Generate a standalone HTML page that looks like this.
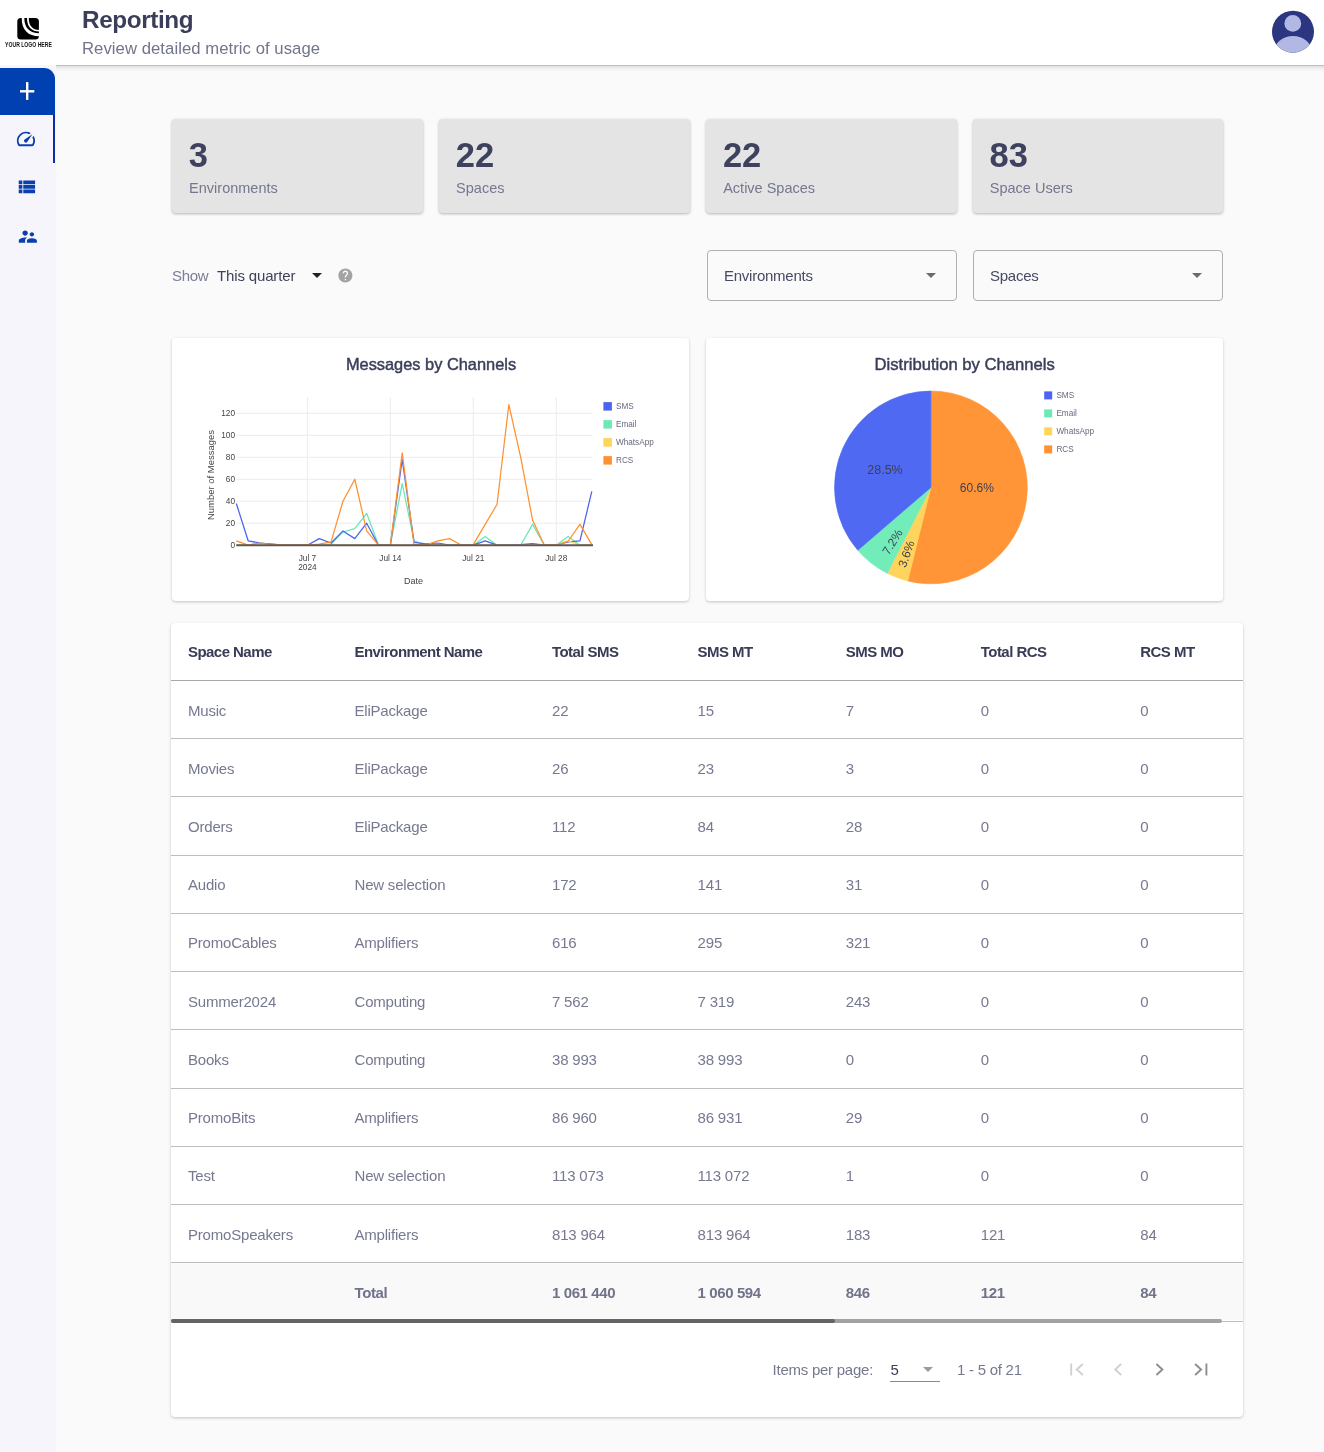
<!DOCTYPE html>
<html><head><meta charset="utf-8">
<style>
*{margin:0;padding:0;box-sizing:border-box}
html,body{width:1324px;height:1452px;overflow:hidden;background:#fafafa;font-family:"Liberation Sans",sans-serif;position:relative}
.abs{position:absolute}
body{will-change:transform}
#header{left:0;top:0;width:1324px;height:65px;background:#fff}
#hline{left:56px;top:65px;width:1269px;height:1px;background:#bdbdc2}
#hshadow{left:56px;top:66px;width:1269px;height:6px;background:linear-gradient(rgba(0,0,0,.10),rgba(0,0,0,.03) 50%,rgba(0,0,0,0))}
#sidebar{left:0;top:65px;width:56px;height:1387px;background:#f7f5fc}
#plus{left:0;top:68px;width:55px;height:47px;background:#0040b0;border-top-right-radius:11px}
#ind{left:53px;top:115px;width:2px;height:48px;background:#0c2fa6}
.logotxt{left:5px;top:41.5px;font-size:6px;font-weight:bold;color:#111;white-space:nowrap;letter-spacing:-0.6px;line-height:7px}
.title{font-size:24.3px;font-weight:bold;color:#3a3e5a;white-space:nowrap;line-height:30px;letter-spacing:-0.4px}
.sub{font-size:16.7px;color:#71748b;white-space:nowrap;line-height:20px;letter-spacing:0.05px}
.card{background:#e4e4e4;border-radius:4px;box-shadow:0 1px 3px rgba(0,0,0,.28)}
.stat{top:119.2px;width:250.8px;height:93.5px}
.stat .n{position:absolute;left:17px;top:16.5px;font-size:34.5px;font-weight:bold;color:#3e425e;line-height:38px}
.stat .l{position:absolute;left:17.3px;top:60.5px;font-size:14.5px;color:#74778e;line-height:17px}
.wcard{background:#fff;border-radius:4px;box-shadow:0 1px 3px rgba(0,0,0,.22)}
.sel{top:249.5px;width:250px;height:51px;border:1px solid #b0b0b0;border-radius:4px;background:#fafafa}
.sel .t{position:absolute;left:16px;top:16.5px;font-size:15px;color:#464a64;line-height:17px;letter-spacing:-0.25px}
.caret{position:absolute;width:0;height:0;border-left:5px solid transparent;border-right:5px solid transparent;border-top:5px solid #6b6b6b}
.show{font-size:15px;color:#7b7e96;line-height:17px;white-space:nowrap;letter-spacing:-0.3px}
.quarter{font-size:15px;color:#3e425c;line-height:17px;white-space:nowrap;letter-spacing:-0.15px}
.th{font-size:15px;font-weight:bold;color:#383c56;white-space:nowrap;line-height:17px;letter-spacing:-0.55px}
.td{font-size:15px;color:#767990;white-space:nowrap;line-height:17px;letter-spacing:-0.2px}
.tf{font-size:15px;font-weight:bold;color:#70738a;white-space:nowrap;line-height:17px;letter-spacing:-0.4px}
.rl{height:1px;background:#bdbdc0}
.pg{font-size:15px;color:#76798e;white-space:nowrap;line-height:17px;letter-spacing:-0.25px}
.pg5{font-size:15px;color:#3a3e5a;white-space:nowrap;line-height:17px}

</style></head><body>
<div id="header" class="abs"></div>
<div id="sidebar" class="abs"></div>
<div id="hline" class="abs"></div>
<div id="hshadow" class="abs"></div>
<div class="abs title" style="left:82px;top:4.5px;">Reporting</div>
<div class="abs sub" style="left:82px;top:39px;">Review detailed metric of usage</div>
<svg class="abs" style="left:0;top:0" width="60" height="60" viewBox="0 0 60 60">
<rect x="17.3" y="17.9" width="21.6" height="21.7" rx="3.6" fill="#000"/>
<path d="M21.7 17.4 L21.7 18 C21.7 29.9 27.9 36.3 39.5 36.3 L39.5 33.3 C29.6 33.3 24.3 27.9 24.3 18 L24.3 17.4 Z" fill="#fff"/>
<path d="M27 17.4 L27 18 C27 26.8 31.4 31.5 39.5 31.5 L39.5 29.9 C32.4 29.9 28.8 25.8 28.8 18 L28.8 17.4 Z" fill="#fff"/>
<text x="5.1" y="46.8" textLength="46.7" lengthAdjust="spacingAndGlyphs" font-family="Liberation Sans" font-weight="bold" font-size="6.7" fill="#111">YOUR LOGO HERE</text>
</svg>
<svg class="abs" style="left:1268px;top:7px" width="50" height="50" viewBox="1268 7 50 50">
<defs><clipPath id="avc"><circle cx="1293" cy="31.7" r="21"/></clipPath></defs>
<circle cx="1293" cy="31.7" r="21" fill="#2b3580"/>
<g clip-path="url(#avc)"><circle cx="1292.8" cy="23.4" r="8.4" fill="#b0b8e3"/>
<ellipse cx="1293" cy="52" rx="19" ry="16" fill="#b0b8e3"/></g>
</svg>
<div id="plus" class="abs"></div>
<svg class="abs" style="left:0;top:68px" width="55" height="47" viewBox="0 68 55 47"><rect x="26" y="82.1" width="2.4" height="17.8" fill="#fff"/><rect x="20" y="90.1" width="14.3" height="2.4" fill="#fff"/></svg>
<div id="ind" class="abs"></div>
<svg class="abs" style="left:15.2px;top:127.5px" width="21.8" height="21.8" viewBox="0 0 24 24"><path fill="#0a3fae" d="M20.38 8.57l-1.23 1.85a8 8 0 0 1-.22 7.58H5.07A8 8 0 0 1 15.58 6.85l1.85-1.23A10 10 0 0 0 3.35 19a2 2 0 0 0 1.72 1h13.85a2 2 0 0 0 1.74-1 10 10 0 0 0-.27-10.44zm-9.79 6.84a2 2 0 0 0 2.83 0l5.66-8.49-8.49 5.66a2 2 0 0 0 0 2.83z"/></svg>
<svg class="abs" style="left:16.4px;top:176.2px" width="21.8" height="21.8" viewBox="0 0 24 24"><path fill="#0a3fae" d="M3 14h4v-4H3v4zm0 5h4v-4H3v4zM3 9h4V5H3v4zm5 5h13v-4H8v4zm0 5h13v-4H8v4zM8 5v4h13V5H8z"/></svg>
<svg class="abs" style="left:17.2px;top:225.5px" width="21.7" height="21" viewBox="0 0 24 24" preserveAspectRatio="none"><path fill="#0a3fae" d="M16.5 12c1.38 0 2.49-1.12 2.49-2.5S17.880 7 16.5 7C15.12 7 14 8.12 14 9.5s1.12 2.5 2.5 2.5zM9 11c1.66 0 2.990-1.34 2.99-3S10.66 5 9 5C7.34 5 6 6.34 6 8s1.34 3 3 3zm7.5 3c-1.83 0-5.5.92-5.5 2.75V19h11v-2.25c0-1.830-3.67-2.75-5.5-2.75zM9 13c-2.34 0-7 1.17-7 3.5V19h7v-2.25c0-.85.33-2.34 2.37-3.47C10.5 13.1 9.66 13 9 13z"/></svg>
<div class="abs card stat" style="left:171.8px"><div class="n">3</div><div class="l">Environments</div></div>
<div class="abs card stat" style="left:438.8px"><div class="n">22</div><div class="l">Spaces</div></div>
<div class="abs card stat" style="left:705.9px"><div class="n">22</div><div class="l">Active Spaces</div></div>
<div class="abs card stat" style="left:972.5px"><div class="n">83</div><div class="l">Space Users</div></div>
<div class="abs show" style="left:172px;top:267px;">Show</div>
<div class="abs quarter" style="left:217px;top:267px;">This quarter</div>
<div class="abs caret" style="left:311.5px;top:273px;border-left-width:5.3px;border-right-width:5.3px;border-top:5px solid #222"></div>
<svg class="abs" style="left:337.2px;top:266.5px" width="16.8" height="16.8" viewBox="0 0 24 24"><path fill="#a3a3a3" d="M12 2C6.48 2 2 6.48 2 12s4.48 10 10 10 10-4.48 10-10S17.520 2 12 2zm1 17h-2v-2h2v2zm2.07-7.75l-.9.92C13.45 12.9 13 13.5 13 15h-2v-.5c0-1.1.45-2.1 1.17-2.83l1.24-1.26c.37-.36.59-.86.59-1.41 0-1.1-.9-2-2-2s-2 .9-2 2H8c0-2.210 1.79-4 4-4s4 1.79 4 4c0 .88-.36 1.68-.93 2.25z"/></svg>
<div class="abs sel" style="left:707px"><div class="t">Environments</div><div class="caret" style="left:218px;top:22px"></div></div>
<div class="abs sel" style="left:973px"><div class="t">Spaces</div><div class="caret" style="left:218px;top:22px"></div></div>
<div class="abs wcard" style="left:172px;top:338px;width:517px;height:263px"></div>
<div class="abs wcard" style="left:706px;top:338px;width:517px;height:263px"></div>
<svg class="abs" style="left:172px;top:338px" width="517" height="263" viewBox="172 338 517 263">
<text x="345.9" y="369.6" textLength="170.2" lengthAdjust="spacingAndGlyphs" font-family="Liberation Sans" font-size="16.2" fill="#3a3e5a" stroke="#3a3e5a" stroke-width="0.45">Messages by Channels</text>
<line x1="236.3" y1="523.22" x2="592" y2="523.22" stroke="#ececec" stroke-width="1"/>
<line x1="236.3" y1="501.24" x2="592" y2="501.24" stroke="#ececec" stroke-width="1"/>
<line x1="236.3" y1="479.26" x2="592" y2="479.26" stroke="#ececec" stroke-width="1"/>
<line x1="236.3" y1="457.28" x2="592" y2="457.28" stroke="#ececec" stroke-width="1"/>
<line x1="236.3" y1="435.30" x2="592" y2="435.30" stroke="#ececec" stroke-width="1"/>
<line x1="236.3" y1="413.32" x2="592" y2="413.32" stroke="#ececec" stroke-width="1"/>
<line x1="307.40" y1="397" x2="307.40" y2="545.2" stroke="#ececec" stroke-width="1"/>
<line x1="390.35" y1="397" x2="390.35" y2="545.2" stroke="#ececec" stroke-width="1"/>
<line x1="473.30" y1="397" x2="473.30" y2="545.2" stroke="#ececec" stroke-width="1"/>
<line x1="556.25" y1="397" x2="556.25" y2="545.2" stroke="#ececec" stroke-width="1"/>
<text x="235" y="548.20" text-anchor="end" font-family="Liberation Sans" font-size="8.3" fill="#444">0</text>
<text x="235" y="526.22" text-anchor="end" font-family="Liberation Sans" font-size="8.3" fill="#444">20</text>
<text x="235" y="504.24" text-anchor="end" font-family="Liberation Sans" font-size="8.3" fill="#444">40</text>
<text x="235" y="482.26" text-anchor="end" font-family="Liberation Sans" font-size="8.3" fill="#444">60</text>
<text x="235" y="460.28" text-anchor="end" font-family="Liberation Sans" font-size="8.3" fill="#444">80</text>
<text x="235" y="438.30" text-anchor="end" font-family="Liberation Sans" font-size="8.3" fill="#444">100</text>
<text x="235" y="416.32" text-anchor="end" font-family="Liberation Sans" font-size="8.3" fill="#444">120</text>
<text x="307.40" y="560.9" text-anchor="middle" font-family="Liberation Sans" font-size="8.3" fill="#444">Jul 7</text>
<text x="390.35" y="560.9" text-anchor="middle" font-family="Liberation Sans" font-size="8.3" fill="#444">Jul 14</text>
<text x="473.30" y="560.9" text-anchor="middle" font-family="Liberation Sans" font-size="8.3" fill="#444">Jul 21</text>
<text x="556.25" y="560.9" text-anchor="middle" font-family="Liberation Sans" font-size="8.3" fill="#444">Jul 28</text>
<text x="307.40" y="570" text-anchor="middle" font-family="Liberation Sans" font-size="8.3" fill="#444">2024</text>
<text x="413.5" y="583.5" text-anchor="middle" font-family="Liberation Sans" font-size="9" fill="#444">Date</text>
<text transform="translate(214.3 475) rotate(-90)" x="-45" y="0" textLength="90" lengthAdjust="spacingAndGlyphs" font-family="Liberation Sans" font-size="9.2" fill="#444">Number of Messages</text>
<polyline points="236.30,545.20 248.15,545.20 260.00,543.00 271.85,544.10 283.70,545.20 295.55,545.20 307.40,545.20 319.25,545.20 331.10,544.10 342.95,532.01 354.80,528.72 366.65,513.33 378.50,545.20 390.35,545.20 402.20,483.66 414.05,540.80 425.90,545.20 437.75,545.20 449.60,545.20 461.45,545.20 473.30,545.20 485.15,536.41 497.00,545.20 508.85,545.20 520.70,545.20 532.55,524.32 544.40,545.20 556.25,545.20 568.10,536.41 579.95,545.20 591.80,545.20" fill="none" stroke="#66e8b0" stroke-width="1.25" stroke-linejoin="round"/>
<polyline points="236.30,503.44 248.15,540.80 260.00,543.00 271.85,544.10 283.70,545.20 295.55,545.20 307.40,545.20 319.25,538.61 331.10,543.00 342.95,530.91 354.80,538.61 366.65,523.22 378.50,545.20 390.35,545.20 402.20,459.48 414.05,542.45 425.90,543.77 437.75,543.00 449.60,545.20 461.45,545.20 473.30,545.20 485.15,540.80 497.00,545.20 508.85,545.20 520.70,544.65 532.55,543.55 544.40,545.20 556.25,545.20 568.10,541.90 579.95,540.80 591.80,491.35" fill="none" stroke="#4d62ef" stroke-width="1.25" stroke-linejoin="round"/>
<polyline points="236.30,545.20 248.15,545.20 260.00,545.20 271.85,545.20 283.70,545.20 295.55,545.20 307.40,545.20 319.25,545.20 331.10,545.20 342.95,545.20 354.80,545.20 366.65,545.20 378.50,545.20 390.35,545.20 402.20,545.20 414.05,545.20 425.90,545.20 437.75,545.20 449.60,545.20 461.45,545.20 473.30,545.20 485.15,545.20 497.00,545.20 508.85,545.20 520.70,545.20 532.55,545.20 544.40,545.20 556.25,545.20 568.10,540.80 579.95,545.20 591.80,545.20" fill="none" stroke="#ffd35a" stroke-width="1.25" stroke-linejoin="round"/>
<polyline points="236.30,540.80 248.15,545.20 260.00,543.00 271.85,544.65 283.70,545.20 295.55,545.20 307.40,545.20 319.25,544.10 331.10,541.90 342.95,501.24 354.80,479.26 366.65,530.91 378.50,545.20 390.35,545.20 402.20,452.88 414.05,544.65 425.90,545.20 437.75,540.80 449.60,538.61 461.45,545.20 473.30,544.65 485.15,524.32 497.00,504.54 508.85,404.53 520.70,457.28 532.55,519.92 544.40,545.20 556.25,545.20 568.10,541.24 579.95,524.32 591.80,544.65" fill="none" stroke="#ff9130" stroke-width="1.25" stroke-linejoin="round"/>
<line x1="236.3" y1="545.2" x2="593" y2="545.2" stroke="#5f5757" stroke-width="2"/>
<rect x="603.4" y="402.1" width="8.5" height="8.5" fill="#4e63ef"/>
<text x="616" y="408.9" font-family="Liberation Sans" font-size="8.2" fill="#66697c">SMS</text>
<rect x="603.4" y="420.1" width="8.5" height="8.5" fill="#6ce9b4"/>
<text x="616" y="426.9" font-family="Liberation Sans" font-size="8.2" fill="#66697c">Email</text>
<rect x="603.4" y="438.1" width="8.5" height="8.5" fill="#ffd45a"/>
<text x="616" y="444.9" font-family="Liberation Sans" font-size="8.2" fill="#66697c">WhatsApp</text>
<rect x="603.4" y="456.1" width="8.5" height="8.5" fill="#ff9133"/>
<text x="616" y="462.9" font-family="Liberation Sans" font-size="8.2" fill="#66697c">RCS</text>
</svg>
<svg class="abs" style="left:706px;top:338px" width="517" height="263" viewBox="706 338 517 263">
<text x="874.6" y="369.6" textLength="180.2" lengthAdjust="spacingAndGlyphs" font-family="Liberation Sans" font-size="16.2" fill="#3a3e5a" stroke="#3a3e5a" stroke-width="0.45">Distribution by Channels</text>
<path d="M930.9,487.4 L930.90,391.00 A96.4,96.4 0 1 1 907.74,580.98 Z" fill="#ff9537" stroke="#ff9537" stroke-width="0.6"/>
<path d="M930.9,487.4 L907.74,580.98 A96.4,96.4 0 0 1 887.29,573.37 Z" fill="#ffd45d" stroke="#ffd45d" stroke-width="0.6"/>
<path d="M930.9,487.4 L887.29,573.37 A96.4,96.4 0 0 1 857.82,550.26 Z" fill="#72edb9" stroke="#72edb9" stroke-width="0.6"/>
<path d="M930.9,487.4 L857.82,550.26 A96.4,96.4 0 0 1 930.90,391.00 Z" fill="#4f69f2" stroke="#4f69f2" stroke-width="0.6"/>
<text x="885" y="474" text-anchor="middle" font-family="Liberation Sans" font-size="12.5" fill="#3d3f52">28.5%</text>
<text x="976.8" y="492" text-anchor="middle" font-family="Liberation Sans" font-size="12" fill="#3d3f52">60.6%</text>
<text transform="translate(892.5 542) rotate(-58)" x="0" y="4" text-anchor="middle" font-family="Liberation Sans" font-size="12" fill="#3d3f52">7.2%</text>
<text transform="translate(906.5 554) rotate(-71)" x="0" y="4" text-anchor="middle" font-family="Liberation Sans" font-size="12" fill="#3d3f52">3.6%</text>
<rect x="1044.2" y="391.4" width="8" height="8" fill="#4e63ef"/>
<text x="1056.4" y="398.2" font-family="Liberation Sans" font-size="8.2" fill="#66697c">SMS</text>
<rect x="1044.2" y="409.4" width="8" height="8" fill="#6ce9b4"/>
<text x="1056.4" y="416.2" font-family="Liberation Sans" font-size="8.2" fill="#66697c">Email</text>
<rect x="1044.2" y="427.4" width="8" height="8" fill="#ffd45a"/>
<text x="1056.4" y="434.2" font-family="Liberation Sans" font-size="8.2" fill="#66697c">WhatsApp</text>
<rect x="1044.2" y="445.4" width="8" height="8" fill="#ff9133"/>
<text x="1056.4" y="452.2" font-family="Liberation Sans" font-size="8.2" fill="#66697c">RCS</text>
</svg>
<div class="abs wcard" style="left:171px;top:623px;width:1072px;height:793.5px"></div>
<div class="abs th" style="left:188px;top:643px;">Space Name</div>
<div class="abs th" style="left:354.5px;top:643px;">Environment Name</div>
<div class="abs th" style="left:552px;top:643px;">Total SMS</div>
<div class="abs th" style="left:697.6px;top:643px;">SMS MT</div>
<div class="abs th" style="left:845.8px;top:643px;">SMS MO</div>
<div class="abs th" style="left:980.8px;top:643px;">Total RCS</div>
<div class="abs th" style="left:1140.3px;top:643px;">RCS MT</div>
<div class="abs" style="left:171px;top:679.6px;width:1072px;height:1.6px;background:#a9a9ad"></div>
<div class="abs td" style="left:188px;top:701.52px;">Music</div>
<div class="abs td" style="left:354.5px;top:701.52px;">EliPackage</div>
<div class="abs td" style="left:552px;top:701.52px;">22</div>
<div class="abs td" style="left:697.6px;top:701.52px;">15</div>
<div class="abs td" style="left:845.8px;top:701.52px;">7</div>
<div class="abs td" style="left:980.8px;top:701.52px;">0</div>
<div class="abs td" style="left:1140.3px;top:701.52px;">0</div>
<div class="abs rl" style="left:171px;top:738px;width:1072px"></div>
<div class="abs td" style="left:188px;top:759.75px;">Movies</div>
<div class="abs td" style="left:354.5px;top:759.75px;">EliPackage</div>
<div class="abs td" style="left:552px;top:759.75px;">26</div>
<div class="abs td" style="left:697.6px;top:759.75px;">23</div>
<div class="abs td" style="left:845.8px;top:759.75px;">3</div>
<div class="abs td" style="left:980.8px;top:759.75px;">0</div>
<div class="abs td" style="left:1140.3px;top:759.75px;">0</div>
<div class="abs rl" style="left:171px;top:796px;width:1072px"></div>
<div class="abs td" style="left:188px;top:817.98px;">Orders</div>
<div class="abs td" style="left:354.5px;top:817.98px;">EliPackage</div>
<div class="abs td" style="left:552px;top:817.98px;">112</div>
<div class="abs td" style="left:697.6px;top:817.98px;">84</div>
<div class="abs td" style="left:845.8px;top:817.98px;">28</div>
<div class="abs td" style="left:980.8px;top:817.98px;">0</div>
<div class="abs td" style="left:1140.3px;top:817.98px;">0</div>
<div class="abs rl" style="left:171px;top:855px;width:1072px"></div>
<div class="abs td" style="left:188px;top:876.21px;">Audio</div>
<div class="abs td" style="left:354.5px;top:876.21px;">New selection</div>
<div class="abs td" style="left:552px;top:876.21px;">172</div>
<div class="abs td" style="left:697.6px;top:876.21px;">141</div>
<div class="abs td" style="left:845.8px;top:876.21px;">31</div>
<div class="abs td" style="left:980.8px;top:876.21px;">0</div>
<div class="abs td" style="left:1140.3px;top:876.21px;">0</div>
<div class="abs rl" style="left:171px;top:913px;width:1072px"></div>
<div class="abs td" style="left:188px;top:934.44px;">PromoCables</div>
<div class="abs td" style="left:354.5px;top:934.44px;">Amplifiers</div>
<div class="abs td" style="left:552px;top:934.44px;">616</div>
<div class="abs td" style="left:697.6px;top:934.44px;">295</div>
<div class="abs td" style="left:845.8px;top:934.44px;">321</div>
<div class="abs td" style="left:980.8px;top:934.44px;">0</div>
<div class="abs td" style="left:1140.3px;top:934.44px;">0</div>
<div class="abs rl" style="left:171px;top:971px;width:1072px"></div>
<div class="abs td" style="left:188px;top:992.67px;">Summer2024</div>
<div class="abs td" style="left:354.5px;top:992.67px;">Computing</div>
<div class="abs td" style="left:552px;top:992.67px;">7 562</div>
<div class="abs td" style="left:697.6px;top:992.67px;">7 319</div>
<div class="abs td" style="left:845.8px;top:992.67px;">243</div>
<div class="abs td" style="left:980.8px;top:992.67px;">0</div>
<div class="abs td" style="left:1140.3px;top:992.67px;">0</div>
<div class="abs rl" style="left:171px;top:1029px;width:1072px"></div>
<div class="abs td" style="left:188px;top:1050.9px;">Books</div>
<div class="abs td" style="left:354.5px;top:1050.9px;">Computing</div>
<div class="abs td" style="left:552px;top:1050.9px;">38 993</div>
<div class="abs td" style="left:697.6px;top:1050.9px;">38 993</div>
<div class="abs td" style="left:845.8px;top:1050.9px;">0</div>
<div class="abs td" style="left:980.8px;top:1050.9px;">0</div>
<div class="abs td" style="left:1140.3px;top:1050.9px;">0</div>
<div class="abs rl" style="left:171px;top:1088px;width:1072px"></div>
<div class="abs td" style="left:188px;top:1109.12px;">PromoBits</div>
<div class="abs td" style="left:354.5px;top:1109.12px;">Amplifiers</div>
<div class="abs td" style="left:552px;top:1109.12px;">86 960</div>
<div class="abs td" style="left:697.6px;top:1109.12px;">86 931</div>
<div class="abs td" style="left:845.8px;top:1109.12px;">29</div>
<div class="abs td" style="left:980.8px;top:1109.12px;">0</div>
<div class="abs td" style="left:1140.3px;top:1109.12px;">0</div>
<div class="abs rl" style="left:171px;top:1146px;width:1072px"></div>
<div class="abs td" style="left:188px;top:1167.36px;">Test</div>
<div class="abs td" style="left:354.5px;top:1167.36px;">New selection</div>
<div class="abs td" style="left:552px;top:1167.36px;">113 073</div>
<div class="abs td" style="left:697.6px;top:1167.36px;">113 072</div>
<div class="abs td" style="left:845.8px;top:1167.36px;">1</div>
<div class="abs td" style="left:980.8px;top:1167.36px;">0</div>
<div class="abs td" style="left:1140.3px;top:1167.36px;">0</div>
<div class="abs rl" style="left:171px;top:1204px;width:1072px"></div>
<div class="abs td" style="left:188px;top:1225.59px;">PromoSpeakers</div>
<div class="abs td" style="left:354.5px;top:1225.59px;">Amplifiers</div>
<div class="abs td" style="left:552px;top:1225.59px;">813 964</div>
<div class="abs td" style="left:697.6px;top:1225.59px;">813 964</div>
<div class="abs td" style="left:845.8px;top:1225.59px;">183</div>
<div class="abs td" style="left:980.8px;top:1225.59px;">121</div>
<div class="abs td" style="left:1140.3px;top:1225.59px;">84</div>
<div class="abs rl" style="left:171px;top:1262px;width:1072px"></div>
<div class="abs" style="left:171px;top:1263px;width:1072px;height:57px;background:#f9f9f9"></div>
<div class="abs tf" style="left:354.5px;top:1284.12px;">Total</div>
<div class="abs tf" style="left:552px;top:1284.12px;">1 061 440</div>
<div class="abs tf" style="left:697.6px;top:1284.12px;">1 060 594</div>
<div class="abs tf" style="left:845.8px;top:1284.12px;">846</div>
<div class="abs tf" style="left:980.8px;top:1284.12px;">121</div>
<div class="abs tf" style="left:1140.3px;top:1284.12px;">84</div>
<div class="abs rl" style="left:171px;top:1321px;width:1072px"></div>
<div class="abs" style="left:171px;top:1319px;width:1051px;height:4px;border-radius:2px;background:#a2a2a2"></div>
<div class="abs" style="left:171px;top:1319px;width:663.5px;height:4px;border-radius:2px;background:#646464"></div>
<div class="abs pg" style="left:772.6px;top:1360.8px;">Items per page:</div>
<div class="abs pg5" style="left:890.5px;top:1360.8px;">5</div>
<div class="abs" style="left:890px;top:1381px;width:50px;height:1px;background:#8a8a8a"></div>
<div class="caret abs" style="left:922.5px;top:1367.3px;border-top-color:#9a9a9a"></div>
<div class="abs pg" style="left:957px;top:1360.8px;">1 - 5 of 21</div>
<svg class="abs" style="left:1060px;top:1355px" width="160" height="30" viewBox="1060 1355 160 30">
<g fill="none" stroke-width="1.9" stroke-linecap="butt">
<path d="M1071.2 1363.5 V1375.5" stroke="#d0d0d2"/>
<path d="M1082.8 1364 L1076.8 1369.5 L1082.8 1375" stroke="#d0d0d2"/>
<path d="M1121.2 1364 L1115.2 1369.5 L1121.2 1375" stroke="#d0d0d2"/>
<path d="M1156.4 1364 L1162.4 1369.5 L1156.4 1375" stroke="#8e8e90"/>
<path d="M1195.1 1364 L1201.1 1369.5 L1195.1 1375" stroke="#8e8e90"/>
<path d="M1206.4 1363.5 V1375.5" stroke="#8e8e90"/>
</g></svg>
</body></html>
